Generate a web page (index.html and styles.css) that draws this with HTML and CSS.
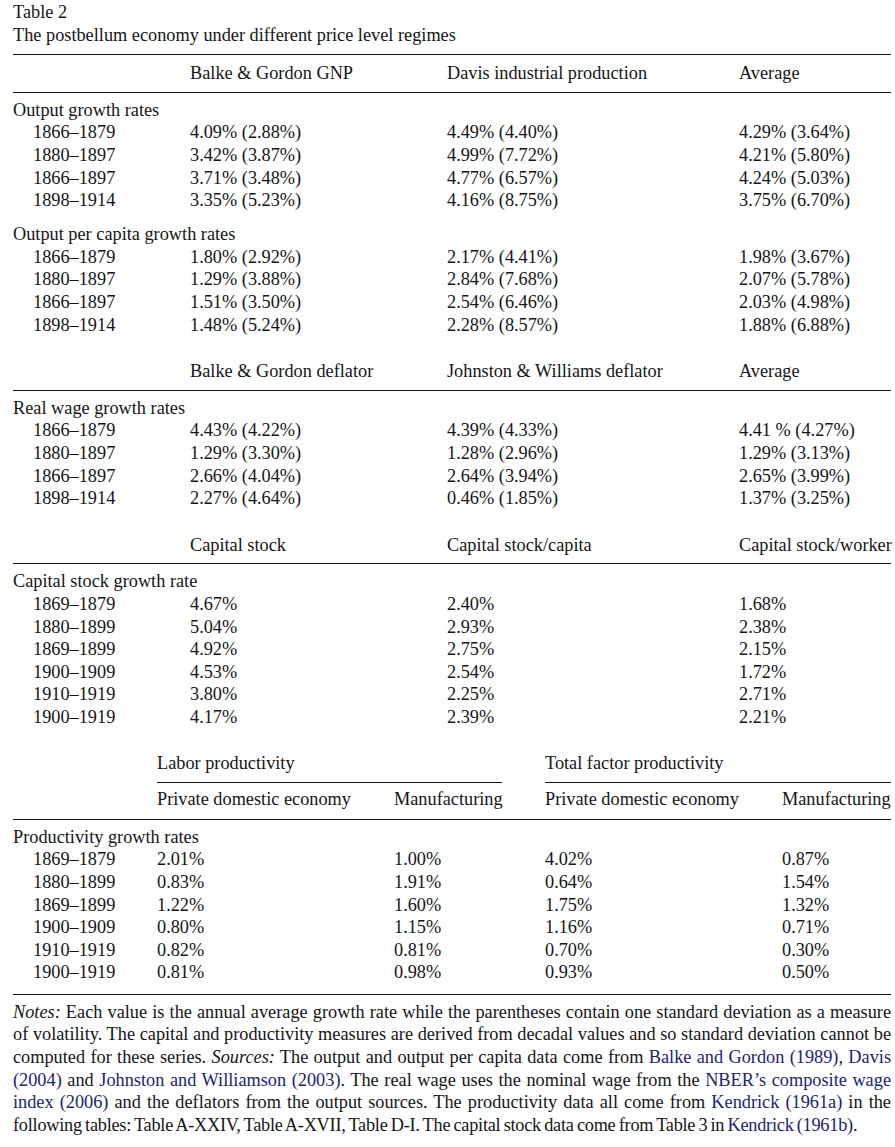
FILE: index.html
```html
<!DOCTYPE html>
<html lang="en">
<head>
<meta charset="utf-8">
<title>Table 2</title>
<link rel="stylesheet" href="styles.css">
</head>
<body>
<div class="page">
  <div class="caption">
    <div>Table 2</div>
    <div>The postbellum economy under different price level regimes</div>
  </div>

  <div class="thead first grid3">
    <span></span><span>Balke &amp; Gordon GNP</span><span>Davis industrial production</span><span>Average</span>
  </div>
  <div class="group">
    <div class="glabel">Output growth rates</div>
    <div class="row grid3"><span class="yr">1866–1879</span><span>4.09% (2.88%)</span><span>4.49% (4.40%)</span><span>4.29% (3.64%)</span></div>
    <div class="row grid3"><span class="yr">1880–1897</span><span>3.42% (3.87%)</span><span>4.99% (7.72%)</span><span>4.21% (5.80%)</span></div>
    <div class="row grid3"><span class="yr">1866–1897</span><span>3.71% (3.48%)</span><span>4.77% (6.57%)</span><span>4.24% (5.03%)</span></div>
    <div class="row grid3"><span class="yr">1898–1914</span><span>3.35% (5.23%)</span><span>4.16% (8.75%)</span><span>3.75% (6.70%)</span></div>
  </div>
  <div class="group spaced">
    <div class="glabel">Output per capita growth rates</div>
    <div class="row grid3"><span class="yr">1866–1879</span><span>1.80% (2.92%)</span><span>2.17% (4.41%)</span><span>1.98% (3.67%)</span></div>
    <div class="row grid3"><span class="yr">1880–1897</span><span>1.29% (3.88%)</span><span>2.84% (7.68%)</span><span>2.07% (5.78%)</span></div>
    <div class="row grid3"><span class="yr">1866–1897</span><span>1.51% (3.50%)</span><span>2.54% (6.46%)</span><span>2.03% (4.98%)</span></div>
    <div class="row grid3"><span class="yr">1898–1914</span><span>1.48% (5.24%)</span><span>2.28% (8.57%)</span><span>1.88% (6.88%)</span></div>
  </div>

  <div class="thead later grid3">
    <span></span><span>Balke &amp; Gordon deflator</span><span>Johnston &amp; Williams deflator</span><span>Average</span>
  </div>
  <div class="group">
    <div class="glabel">Real wage growth rates</div>
    <div class="row grid3"><span class="yr">1866–1879</span><span>4.43% (4.22%)</span><span>4.39% (4.33%)</span><span>4.41 % (4.27%)</span></div>
    <div class="row grid3"><span class="yr">1880–1897</span><span>1.29% (3.30%)</span><span>1.28% (2.96%)</span><span>1.29% (3.13%)</span></div>
    <div class="row grid3"><span class="yr">1866–1897</span><span>2.66% (4.04%)</span><span>2.64% (3.94%)</span><span>2.65% (3.99%)</span></div>
    <div class="row grid3"><span class="yr">1898–1914</span><span>2.27% (4.64%)</span><span>0.46% (1.85%)</span><span>1.37% (3.25%)</span></div>
  </div>

  <div class="thead later grid3">
    <span></span><span>Capital stock</span><span>Capital stock/capita</span><span>Capital stock/worker</span>
  </div>
  <div class="group">
    <div class="glabel">Capital stock growth rate</div>
    <div class="row grid3"><span class="yr">1869–1879</span><span>4.67%</span><span>2.40%</span><span>1.68%</span></div>
    <div class="row grid3"><span class="yr">1880–1899</span><span>5.04%</span><span>2.93%</span><span>2.38%</span></div>
    <div class="row grid3"><span class="yr">1869–1899</span><span>4.92%</span><span>2.75%</span><span>2.15%</span></div>
    <div class="row grid3"><span class="yr">1900–1909</span><span>4.53%</span><span>2.54%</span><span>1.72%</span></div>
    <div class="row grid3"><span class="yr">1910–1919</span><span>3.80%</span><span>2.25%</span><span>2.71%</span></div>
    <div class="row grid3"><span class="yr">1900–1919</span><span>4.17%</span><span>2.39%</span><span>2.21%</span></div>
  </div>

  <div class="phead">
    <div class="grid5 super">
      <span></span>
      <span class="span2 underline lp">Labor productivity</span>
      <span class="span2 underline">Total factor productivity</span>
    </div>
    <div class="grid5 sub">
      <span></span><span>Private domestic economy</span><span>Manufacturing</span><span>Private domestic economy</span><span>Manufacturing</span>
    </div>
  </div>
  <div class="group last">
    <div class="glabel">Productivity growth rates</div>
    <div class="row grid5"><span class="yr">1869–1879</span><span>2.01%</span><span>1.00%</span><span>4.02%</span><span>0.87%</span></div>
    <div class="row grid5"><span class="yr">1880–1899</span><span>0.83%</span><span>1.91%</span><span>0.64%</span><span>1.54%</span></div>
    <div class="row grid5"><span class="yr">1869–1899</span><span>1.22%</span><span>1.60%</span><span>1.75%</span><span>1.32%</span></div>
    <div class="row grid5"><span class="yr">1900–1909</span><span>0.80%</span><span>1.15%</span><span>1.16%</span><span>0.71%</span></div>
    <div class="row grid5"><span class="yr">1910–1919</span><span>0.82%</span><span>0.81%</span><span>0.70%</span><span>0.30%</span></div>
    <div class="row grid5"><span class="yr">1900–1919</span><span>0.81%</span><span>0.98%</span><span>0.93%</span><span>0.50%</span></div>
  </div>

  <p class="notes"><em>Notes:</em> Each value is the annual average growth rate while the parentheses contain one standard deviation as a measure of volatility. The capital and productivity measures are derived from decadal values and so standard deviation cannot be computed for these series. <em>Sources:</em> The output and output per capita data come from <a class="ref">Balke and Gordon (1989)</a>, <a class="ref">Davis (2004)</a> and <a class="ref">Johnston and Williamson (2003)</a>. The real wage uses the nominal wage from the <a class="ref">NBER’s composite wage index (2006)</a> and the deflators from the output sources. The productivity data all come from <a class="ref">Kendrick (1961a)</a> in the <span class="tight">following tables: Table A-XXIV, Table A-XVII, Table D-I. The capital stock data come from Table 3 in <a class="ref">Kendrick (1961b)</a>.</span></p>
</div>
</body>
</html>
```

FILE: styles.css
```css
html, body {
  margin: 0;
  padding: 0;
  background: #ffffff;
}

.page {
  padding: 1px 4px 0 13px;
  font-family: "Liberation Serif", "Times New Roman", serif;
  font-size: 18.3px;
  line-height: 22.6px;
  color: #151515;
}

.caption {
  padding-bottom: 8px;
}

.grid3 {
  display: grid;
  grid-template-columns: 177px 257px 292px 1fr;
}

.grid5 {
  display: grid;
  grid-template-columns: 144px 237px 151px 237px 1fr;
}

.thead {
  padding: 7px 0;
  border-bottom: 1.5px solid #111;
  white-space: nowrap;
}

.thead.first {
  border-top: 1.5px solid #111;
}

.thead.later {
  margin-top: 17px;
}

.group {
  padding-top: 6px;
}

.group.spaced {
  padding-top: 11.5px;
}

.glabel {
  white-space: nowrap;
}

.row .yr {
  padding-left: 20px;
}

.row span {
  white-space: nowrap;
}

.phead {
  margin-top: 23px;
  border-bottom: 1.5px solid #111;
}

.super .span2 {
  grid-column: span 2;
}

.underline {
  padding-bottom: 8px;
  border-bottom: 1.5px solid #111;
}

.underline.lp {
  margin-right: 43px;
}

.sub {
  padding: 5px 0 8px;
  white-space: nowrap;
}

.group.last {
  padding-bottom: 10px;
  border-bottom: 1.5px solid #111;
}

.notes {
  margin: 0;
  padding-top: 6px;
  text-align: justify;
}

.notes em {
  font-style: italic;
}

.tight {
  letter-spacing: -0.25px;
  word-spacing: -1.1px;
}

.ref {
  color: #1c2370;
  text-decoration: none;
}
```
